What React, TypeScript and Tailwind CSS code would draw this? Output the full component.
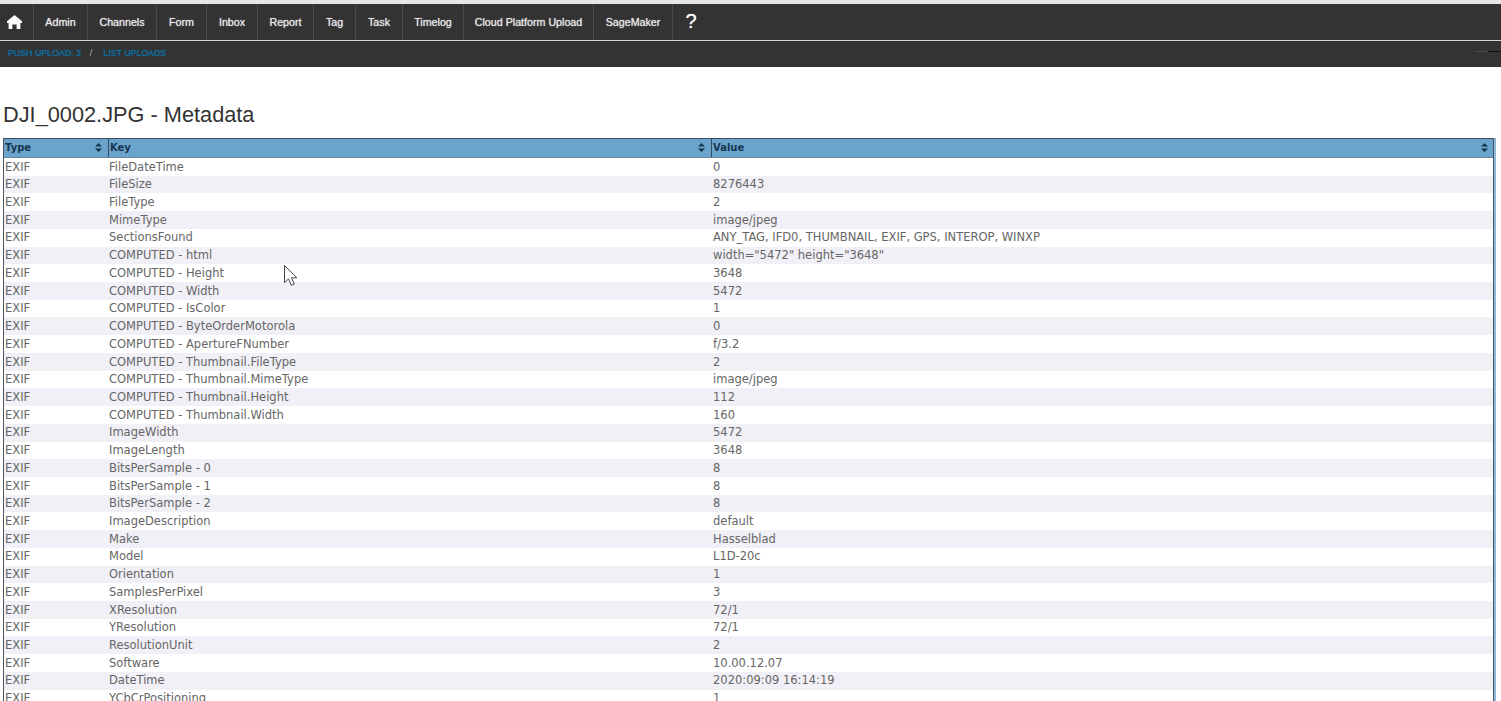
const NAV_ITEMS = [
  { label: "Admin", width: "w-[54px]" },
  { label: "Channels", width: "w-[69px]" },
  { label: "Form", width: "w-[50px]" },
  { label: "Inbox", width: "w-[51px]" },
  { label: "Report", width: "w-[56px]" },
  { label: "Tag", width: "w-[42px]" },
  { label: "Task", width: "w-[47px]" },
  { label: "Timelog", width: "w-[61px]" },
  { label: "Cloud Platform Upload", width: "w-[130px]" },
  { label: "SageMaker", width: "w-[79px]" },
];

const ROWS: [string, string][] = [
  ["FileDateTime", "0"],
  ["FileSize", "8276443"],
  ["FileType", "2"],
  ["MimeType", "image/jpeg"],
  ["SectionsFound", "ANY_TAG, IFD0, THUMBNAIL, EXIF, GPS, INTEROP, WINXP"],
  ["COMPUTED - html", 'width="5472" height="3648"'],
  ["COMPUTED - Height", "3648"],
  ["COMPUTED - Width", "5472"],
  ["COMPUTED - IsColor", "1"],
  ["COMPUTED - ByteOrderMotorola", "0"],
  ["COMPUTED - ApertureFNumber", "f/3.2"],
  ["COMPUTED - Thumbnail.FileType", "2"],
  ["COMPUTED - Thumbnail.MimeType", "image/jpeg"],
  ["COMPUTED - Thumbnail.Height", "112"],
  ["COMPUTED - Thumbnail.Width", "160"],
  ["ImageWidth", "5472"],
  ["ImageLength", "3648"],
  ["BitsPerSample - 0", "8"],
  ["BitsPerSample - 1", "8"],
  ["BitsPerSample - 2", "8"],
  ["ImageDescription", "default"],
  ["Make", "Hasselblad"],
  ["Model", "L1D-20c"],
  ["Orientation", "1"],
  ["SamplesPerPixel", "3"],
  ["XResolution", "72/1"],
  ["YResolution", "72/1"],
  ["ResolutionUnit", "2"],
  ["Software", "10.00.12.07"],
  ["DateTime", "2020:09:09 16:14:19"],
  ["YCbCrPositioning", "1"],
];

function SortIcon() {
  return (
    <svg width="7" height="9" viewBox="0 0 7 9" className="text-[#17364f]">
      <path d="M3.5 0 7 3.6H0z M3.5 9 0 5.4h7z" fill="currentColor" />
    </svg>
  );
}

function HeaderCell({ label, className }: { label: string; className: string }) {
  return (
    <div className={`flex items-center justify-between pb-[2px] pl-[1px] ${className}`}>
      <span>{label}</span>
      <SortIcon />
    </div>
  );
}

export default function App() {
  return (
    <div className="relative h-[701px] overflow-hidden bg-white">
      {/* top strip */}
      <div className="h-[4px] bg-[#e6e6e6]" />

      <nav className="flex h-[36px] bg-[#333333] font-['Liberation_Sans',sans-serif] text-[10.7px] text-[#e8e8e8] [text-shadow:0_0_1px_#d0d0d0]">
        <div className="flex w-[34px] items-center justify-center border-r border-[#4a4a4a] pr-[5px]">
          <svg width="15" height="14" viewBox="0 0 15 14" className="text-white">
            <path
              d="M7.5 0 15 6.2V8h-1.6v6H9.6V9.4H5.4V14H1.6V8H0V6.2z"
              fill="currentColor"
            />
          </svg>
        </div>
        {NAV_ITEMS.map((item) => (
          <div
            key={item.label}
            className={`flex items-center justify-center border-r border-[#4a4a4a] ${item.width}`}
          >
            {item.label}
          </div>
        ))}
        <div className="flex w-[36px] items-center justify-center pb-[2px] text-[20px] text-white">
          ?
        </div>
      </nav>

      <div className="h-px bg-[#d8d8d8]" />

      <div className="relative flex h-[26px] items-center bg-[#333333] pl-[8px] font-['Liberation_Sans',sans-serif] text-[8.8px] text-[#0f6fa0] [text-shadow:0_0_1px_#0f6fa0]">
        <span>PUSH UPLOAD: 3</span>
        <span className="ml-[9px] mr-[11px] text-[#b5b5b5] [text-shadow:none]">/</span>
        <span>LIST UPLOADS</span>
        <div className="absolute right-0 top-[10px] flex h-px w-[25px]">
          <div className="w-[12px] bg-[#4d4d4d]" />
          <div className="flex-1 bg-[#111111]" />
        </div>
      </div>

      <h1 className="mt-[35px] pl-[3px] font-['Liberation_Sans',sans-serif] text-[21.75px] leading-[26px] text-[#333333]">
        DJI_0002.JPG - Metadata
      </h1>

      {/* metadata table */}
      <div className="ml-[3px] mt-[10px] w-[1491px] border-x border-[#4b5563] font-['DejaVu_Sans',sans-serif] text-[11.5px] text-[#666666] shadow-[2px_0_0_#8db9d6]">
        <div className="flex h-[20px] border-y border-t-[#3f4d5c] border-b-[#6d8699] bg-[#6aa3cb] text-[10px] font-bold text-[#17364f]">
          <HeaderCell label="Type" className="w-[104px] pr-[6px]" />
          <HeaderCell label="Key" className="w-[603px] border-l border-[#2f4a60] pr-[6px]" />
          <HeaderCell label="Value" className="flex-1 border-l border-[#2f4a60] pr-[5px]" />
        </div>
        {ROWS.map(([key, value], i) => (
          <div
            key={key}
            className={`flex h-[17.72px] items-center pt-[1px] leading-none ${i % 2 === 1 ? "bg-[#f0f0f6]" : "bg-white"}`}
          >
            <div className="w-[104px] pl-[1px]">EXIF</div>
            <div className="w-[603px] pl-[1px]">{key}</div>
            <div className="flex-1 pl-[2px]">{value}</div>
          </div>
        ))}
      </div>

      {/* mouse pointer */}
      <svg width="17" height="23" viewBox="0 0 17 23" className="absolute left-[284px] top-[265px]">
        <path
          d="M.5.5v17l4-3.6 2.8 6.4 3-1.3-2.8-6.2h5.4z"
          fill="#ffffff"
          stroke="#444444"
          strokeWidth="1"
        />
      </svg>
    </div>
  );
}
